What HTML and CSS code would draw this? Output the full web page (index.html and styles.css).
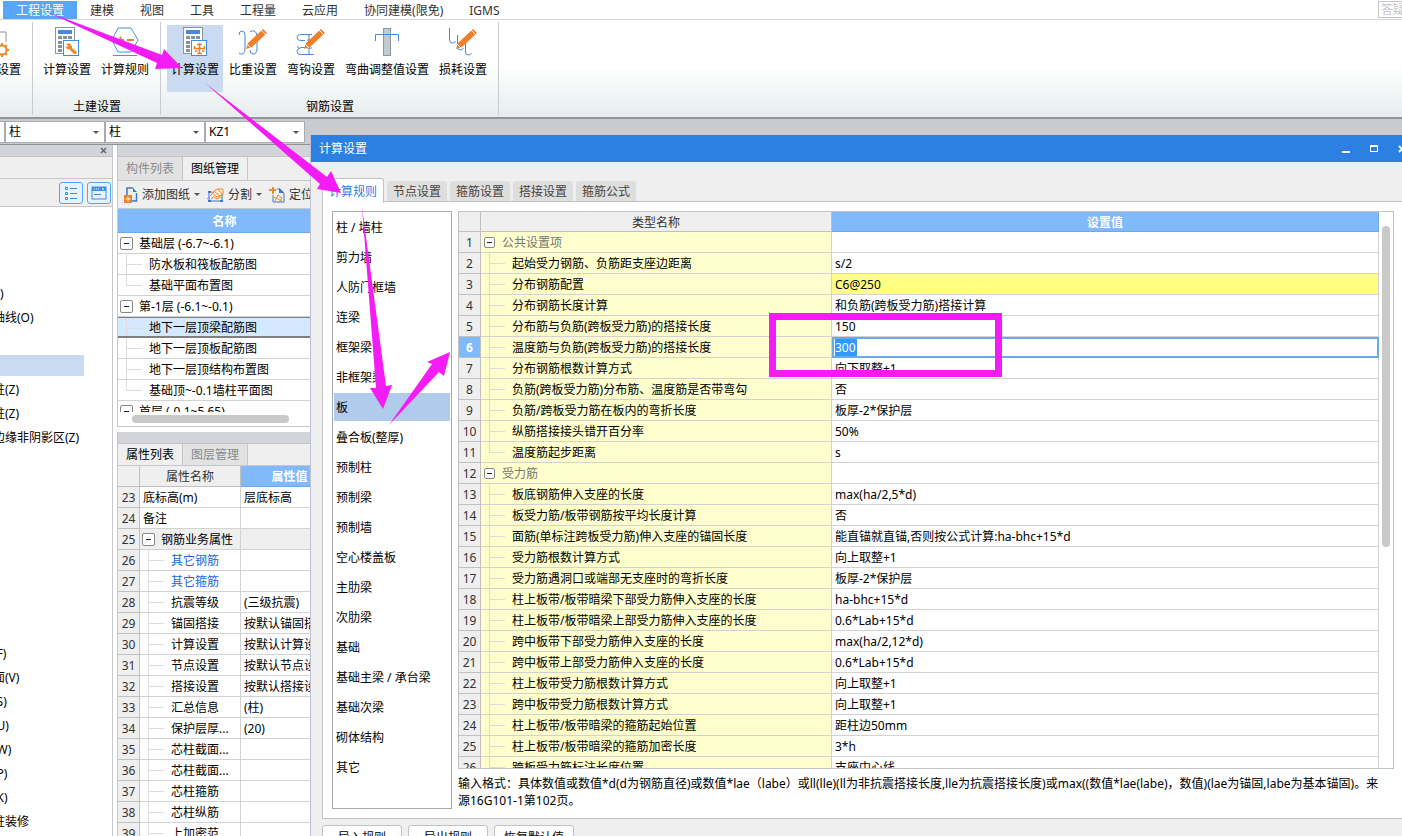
FILE: index.html
```html
<!DOCTYPE html>
<html lang="zh-CN">
<head>
<meta charset="utf-8">
<meta name="viewport" content="width=device-width, initial-scale=1">
<title>计算设置</title>
<link rel="stylesheet" href="styles.css">
</head>
<body>
<svg class="defs" width="0" height="0" aria-hidden="true">
  <defs>
    <g id="calc">
      <rect x="0.5" y="0.5" width="19" height="26" fill="#fff" stroke="#8b979e"/>
      <rect x="3" y="3" width="14" height="4" fill="#4689dd"/>
      <path d="M3 9h4v3H3zM8 9h4v3H8zM13 9h4v3h-4zM3 14h4v3H3zM8 14h4v3H8zM3 18h4v3H3zM3 22h4v3H3z" fill="#87939b"/>
      <rect x="8.500" y="13.500" width="15" height="15" fill="#fff" stroke="#3f8fe0"/>
    </g>
    <g id="pencil">
      <path d="M0 21l2-6 15-14 4 4L6 19z" fill="#f07f2c"/>
      <path d="M15 2l5 5M1 16l4 4" stroke="#fff" stroke-width="1"/>
    </g>
  </defs>
</svg>
<div class="app">
  <nav class="menubar">
    <button class="menu active">工程设置</button>
    <button class="menu">建模</button>
    <button class="menu">视图</button>
    <button class="menu">工具</button>
    <button class="menu">工程量</button>
    <button class="menu">云应用</button>
    <button class="menu">协同建模(限免)</button>
    <button class="menu">IGMS</button>
    <input class="search" type="text" placeholder="答疑" aria-label="答疑">
  </nav>

  <div class="ribbon">
    <section class="group first">
      <div class="tools">
        <button class="tool">
          <svg width="24" height="30" viewBox="0 0 24 30" fill="none">
            <path d="M0 1h12v4h9v10M12 5v14M4 10h8M4 17h8" stroke="#8b979e"/>
            <circle cx="17" cy="23" r="4.500" stroke="#ee8a2e" stroke-width="2"/>
            <path d="M17 16v2M17 28v2M10 23h2M22 23h2M12 18l2 2M20 26l2 2M22 18l-2 2M14 26l-2 2" stroke="#ee8a2e" stroke-width="2"/>
          </svg>
          <span>楼层设置</span>
        </button>
      </div>
    </section>
    <section class="group">
      <div class="tools">
        <button class="tool">
          <svg width="24" height="30" viewBox="0 0 24 30">
            <use href="#calc"/>
            <path d="M11 17l3-1 3 3v2l5 4-1 2-2 0-5-5h-2l-2-3 2 1 1-1z" fill="#ee8a2e"/>
          </svg>
          <span>计算设置</span>
        </button>
        <button class="tool">
          <svg width="28" height="30" viewBox="0 0 28 30" fill="none">
            <path d="M7 1h13l7 12-7 12H7L1 13zM2 28.500h24" stroke="#4a90e2"/>
            <path d="M6 13h7M9.500 9.500v7M16 13h7" stroke="#f07f2c" stroke-width="2"/>
          </svg>
          <span>计算规则</span>
        </button>
      </div>
      <h2>土建设置</h2>
    </section>
    <section class="group">
      <div class="tools">
        <button class="tool active">
          <svg width="24" height="30" viewBox="0 0 24 30" fill="none">
            <use href="#calc"/>
            <path d="M16.500 16v10M14 17.500h5M11.500 19v2.500h10V19M12 24h2.500M19 24h2.500M14 26.500h5" stroke="#f07f2c" stroke-width="1.500"/>
          </svg>
          <span>计算设置</span>
        </button>
        <button class="tool">
          <svg width="30" height="30" viewBox="0 0 30 30" fill="none">
            <path d="M1 8q0-4 3-4t3 4v14q0 5-3 5-2 0-3-1M12 5q2-2 4-1 3 1 3 5v13q0 5-4 5-3 0-3-4" stroke="#4689dd"/>
            <use href="#pencil" x="8" y="1"/>
          </svg>
          <span>比重设置</span>
        </button>
        <button class="tool">
          <svg width="30" height="30" viewBox="0 0 30 30" fill="none">
            <path d="M16 7.500H5q-4 0-4 3t4 3h4M1 20h2M18 27.500H5q-4 0-4-3t4-4h4M13 7v20M11 13h5M11 21h5M10 27.500h8" stroke="#4689dd"/>
            <use href="#pencil" x="8" y="1"/>
          </svg>
          <span>弯钩设置</span>
        </button>
        <button class="tool">
          <svg width="26" height="30" viewBox="0 0 26 30" fill="none">
            <rect x="9.500" y="1.500" width="7" height="27" fill="#c3cacd" stroke="#8b979e"/>
            <path d="M1.500 14V7.500h23V14" stroke="#4689dd"/>
          </svg>
          <span>弯曲调整值设置</span>
        </button>
        <button class="tool">
          <svg width="30" height="30" viewBox="0 0 30 30" fill="none">
            <path d="M1.500 1v12q0 3 3 3 2 0 3-2M9.500 8v12q0 3 3 3 2 0 3-2M17.500 16v9q0 3 3 3 2 0 3-2" stroke="#4689dd"/>
            <use href="#pencil" x="8" y="1"/>
          </svg>
          <span>损耗设置</span>
        </button>
      </div>
      <h2>钢筋设置</h2>
    </section>
  </div>

  <div class="selectors">
    <span class="combo stub"></span>
    <span class="combo"><select aria-label="构件大类"><option>柱</option></select><i class="caret"></i></span>
    <span class="combo"><select aria-label="构件类型"><option>柱</option></select><i class="caret"></i></span>
    <span class="combo"><select aria-label="构件名称"><option>KZ1</option></select><i class="caret"></i></span>
  </div>

  <div class="workspace">
    <aside class="nav">
      <div class="grip"><button class="close" aria-label="关闭">
        <svg width="7" height="7" viewBox="0 0 7 7"><path d="M1 1l5 5M6 1L1 6" stroke="#666" stroke-width="1.500"/></svg></button></div>
      <div class="nav-title"></div>
      <div class="nav-tools">
        <button aria-label="列表视图">
          <svg width="14" height="14" viewBox="0 0 14 14" fill="none" stroke="#3f8fe0"><path d="M1.500 1.500h2v2h-2zM1.500 6.500h2v2h-2zM1.500 11.500h2v2h-2zM6 2.500h7M6 7.500h7M6 12.500h7"/></svg>
        </button>
        <button aria-label="图标视图">
          <svg width="16" height="14" viewBox="0 0 16 14" fill="none"><rect x="1" y="1" width="14" height="12" stroke="#3f8fe0"/><path d="M1 1h14v4H1z" fill="#3f8fe0"/><path d="M3 3h1M5 3h1M7 3h1M11 3h2" stroke="#fff"/><path d="M3 8.500h7" stroke="#3f8fe0"/></svg>
        </button>
      </div>
      <ul class="nav-list">
        <li>轴网(J)</li><li>辅助轴线(O)</li><li></li><li class="selected"></li>
        <li>构造柱(Z)</li><li>砌体柱(Z)</li><li>约束边缘非阴影区(Z)</li>
        <li></li><li></li><li></li><li></li><li></li><li></li><li></li><li></li>
        <li>房间(F)</li><li>楼地面(V)</li><li>踢脚(S)</li><li>墙裙(U)</li><li>墙面(W)</li><li>天棚(P)</li><li>吊顶(K)</li><li>独立柱装修</li>
      </ul>
    </aside>

    <div class="side">
      <section class="drawings">
        <div class="grip"></div>
        <div class="tabs"><button>构件列表</button><button class="active">图纸管理</button></div>
        <div class="bar">
          <button>
            <svg width="14" height="16" viewBox="0 0 14 16" fill="none"><path d="M3 8V1h6M12.500 6v8H8" stroke="#3c78c8" stroke-width="1.500"/><path d="M9 1v4h4z" fill="#3c78c8"/><rect y="8" width="8" height="8" fill="#f07f2c"/><path d="M1.500 12h5M4 9.500v5" stroke="#fff"/></svg>
            添加图纸<i class="caret"></i></button>
          <button>
            <svg width="17" height="16" viewBox="0 0 17 16" fill="none"><path d="M5 5H2v9h13V7" stroke="#3c78c8"/><path d="M1 5h3M1 14h3M13 14h3" stroke="#3c78c8" stroke-width="2"/><path d="M0 12L9 3M5 6l5-4h6v6l-6 2zM8 5l5 4M11 2l4 5M4 12l3-2 3 2 4-2" stroke="#ee8a2e"/></svg>
            分割<i class="caret"></i></button>
          <button>
            <svg width="16" height="16" viewBox="0 0 16 16" fill="none"><path d="M8 2h3l4 4v9H4V8" stroke="#3c78c8"/><path d="M10 1v5h5z" fill="#3c78c8"/><path d="M0 3h7M4 0v7" stroke="#ee8a2e" stroke-width="2"/><path d="M6 14l3-6 4 3-3 4M5 10l8 4" stroke="#ee8a2e"/></svg>
            定位</button>
        </div>
        <div class="drawing-scroll">
          <table class="grid drawing-grid">
            <thead><tr><th>名称</th></tr></thead>
            <tbody>
              <tr><td class="root"><button class="toggle" aria-label="折叠"></button>基础层 (-6.7~-6.1)</td></tr>
              <tr><td class="leaf">防水板和筏板配筋图</td></tr>
              <tr><td class="leaf last">基础平面布置图</td></tr>
              <tr><td class="root"><button class="toggle" aria-label="折叠"></button>第-1层 (-6.1~-0.1)</td></tr>
              <tr class="current"><td class="leaf">地下一层顶梁配筋图</td></tr>
              <tr><td class="leaf">地下一层顶板配筋图</td></tr>
              <tr><td class="leaf">地下一层顶结构布置图</td></tr>
              <tr><td class="leaf last">基础顶~-0.1墙柱平面图</td></tr>
              <tr><td class="root"><button class="toggle" aria-label="折叠"></button>首层 (-0.1~5.65)</td></tr>
            </tbody>
          </table>
        </div>
        <div class="hscroll"><i></i></div>
      </section>

      <section class="props">
        <div class="grip"></div>
        <div class="tabs"><button class="active">属性列表</button><button>图层管理</button></div>
        <table class="grid prop-grid">
          <colgroup><col class="c-num"><col class="c-name"><col></colgroup>
          <thead><tr><th></th><th>属性名称</th><th class="hot">属性值</th></tr></thead>
          <tbody>
            <tr><th>23</th><td>底标高(m)</td><td>层底标高</td></tr>
            <tr><th>24</th><td>备注</td><td></td></tr>
            <tr class="section"><th>25</th><td class="root"><button class="toggle" aria-label="折叠"></button>钢筋业务属性</td><td></td></tr>
            <tr><th>26</th><td class="leaf link">其它钢筋</td><td></td></tr>
            <tr><th>27</th><td class="leaf link">其它箍筋</td><td></td></tr>
            <tr><th>28</th><td class="leaf">抗震等级</td><td>(三级抗震)</td></tr>
            <tr><th>29</th><td class="leaf">锚固搭接</td><td>按默认锚固搭接</td></tr>
            <tr><th>30</th><td class="leaf">计算设置</td><td>按默认计算设置</td></tr>
            <tr><th>31</th><td class="leaf">节点设置</td><td>按默认节点设置</td></tr>
            <tr><th>32</th><td class="leaf">搭接设置</td><td>按默认搭接设置</td></tr>
            <tr><th>33</th><td class="leaf">汇总信息</td><td>(柱)</td></tr>
            <tr><th>34</th><td class="leaf">保护层厚...</td><td>(20)</td></tr>
            <tr><th>35</th><td class="leaf">芯柱截面...</td><td></td></tr>
            <tr><th>36</th><td class="leaf">芯柱截面...</td><td></td></tr>
            <tr><th>37</th><td class="leaf">芯柱箍筋</td><td></td></tr>
            <tr><th>38</th><td class="leaf">芯柱纵筋</td><td></td></tr>
            <tr><th>39</th><td class="leaf">上加密范</td><td></td></tr>
          </tbody>
        </table>
      </section>
    </div>
  </div>

  <div class="dialog" role="dialog" aria-labelledby="dialog-title">
    <header class="titlebar">
      <h1 id="dialog-title">计算设置</h1>
      <button aria-label="最小化"><svg width="8" height="8" viewBox="0 0 8 8"><path d="M0 6h8v2H0z" fill="#fff"/></svg></button>
      <button aria-label="最大化"><svg width="8" height="8" viewBox="0 0 8 8"><path d="M0 0h8v7H0zM1 2v4h6V2z" fill="#fff" fill-rule="evenodd"/></svg></button>
      <button aria-label="关闭"><svg width="8" height="8" viewBox="0 0 8 8"><path d="M1 1l6 6M7 1L1 7" stroke="#fff" stroke-width="2"/></svg></button>
    </header>
    <div class="dialog-tabs">
      <button class="active">计算规则</button><button>节点设置</button><button>箍筋设置</button><button>搭接设置</button><button>箍筋公式</button>
    </div>
    <div class="pane">
      <ul class="kinds">
        <li>柱 / 墙柱</li><li>剪力墙</li><li>人防门框墙</li><li>连梁</li><li>框架梁</li><li>非框架梁</li><li class="selected">板</li><li>叠合板(整厚)</li><li>预制柱</li><li>预制梁</li><li>预制墙</li><li>空心楼盖板</li><li>主肋梁</li><li>次肋梁</li><li>基础</li><li>基础主梁 / 承台梁</li><li>基础次梁</li><li>砌体结构</li><li>其它</li>
      </ul>
      <div class="rules">
        <div class="rule-box">
          <div class="rule-scroll">
            <table class="grid rule-grid">
              <colgroup><col class="c-num"><col class="c-kind"><col></colgroup>
              <thead><tr><th></th><th>类型名称</th><th class="hot">设置值</th></tr></thead>
              <tbody>
                <tr><th>1</th><td class="root"><button class="toggle" aria-label="折叠"></button>公共设置项</td><td></td></tr>
                <tr><th>2</th><td class="leaf">起始受力钢筋、负筋距支座边距离</td><td>s/2</td></tr>
                <tr class="changed"><th>3</th><td class="leaf">分布钢筋配置</td><td>C6@250</td></tr>
                <tr><th>4</th><td class="leaf">分布钢筋长度计算</td><td>和负筋(跨板受力筋)搭接计算</td></tr>
                <tr><th>5</th><td class="leaf">分布筋与负筋(跨板受力筋)的搭接长度</td><td>150</td></tr>
                <tr class="editing"><th>6</th><td class="leaf">温度筋与负筋(跨板受力筋)的搭接长度</td><td><input type="text" value="300" aria-label="温度筋与负筋(跨板受力筋)的搭接长度"></td></tr>
                <tr><th>7</th><td class="leaf">分布钢筋根数计算方式</td><td>向下取整+1</td></tr>
                <tr><th>8</th><td class="leaf">负筋(跨板受力筋)分布筋、温度筋是否带弯勾</td><td>否</td></tr>
                <tr><th>9</th><td class="leaf">负筋/跨板受力筋在板内的弯折长度</td><td>板厚-2*保护层</td></tr>
                <tr><th>10</th><td class="leaf">纵筋搭接接头错开百分率</td><td>50%</td></tr>
                <tr><th>11</th><td class="leaf last">温度筋起步距离</td><td>s</td></tr>
                <tr><th>12</th><td class="root"><button class="toggle" aria-label="折叠"></button>受力筋</td><td></td></tr>
                <tr><th>13</th><td class="leaf">板底钢筋伸入支座的长度</td><td>max(ha/2,5*d)</td></tr>
                <tr><th>14</th><td class="leaf">板受力筋/板带钢筋按平均长度计算</td><td>否</td></tr>
                <tr><th>15</th><td class="leaf">面筋(单标注跨板受力筋)伸入支座的锚固长度</td><td>能直锚就直锚,否则按公式计算:ha-bhc+15*d</td></tr>
                <tr><th>16</th><td class="leaf">受力筋根数计算方式</td><td>向上取整+1</td></tr>
                <tr><th>17</th><td class="leaf">受力筋遇洞口或端部无支座时的弯折长度</td><td>板厚-2*保护层</td></tr>
                <tr><th>18</th><td class="leaf">柱上板带/板带暗梁下部受力筋伸入支座的长度</td><td>ha-bhc+15*d</td></tr>
                <tr><th>19</th><td class="leaf">柱上板带/板带暗梁上部受力筋伸入支座的长度</td><td>0.6*Lab+15*d</td></tr>
                <tr><th>20</th><td class="leaf">跨中板带下部受力筋伸入支座的长度</td><td>max(ha/2,12*d)</td></tr>
                <tr><th>21</th><td class="leaf">跨中板带上部受力筋伸入支座的长度</td><td>0.6*Lab+15*d</td></tr>
                <tr><th>22</th><td class="leaf">柱上板带受力筋根数计算方式</td><td>向上取整+1</td></tr>
                <tr><th>23</th><td class="leaf">跨中板带受力筋根数计算方式</td><td>向上取整+1</td></tr>
                <tr><th>24</th><td class="leaf">柱上板带/板带暗梁的箍筋起始位置</td><td>距柱边50mm</td></tr>
                <tr><th>25</th><td class="leaf">柱上板带/板带暗梁的箍筋加密长度</td><td>3*h</td></tr>
                <tr><th>26</th><td class="leaf">跨板受力筋标注长度位置</td><td>支座中心线</td></tr>
              </tbody>
            </table>
          </div>
          <div class="vscroll"><i></i></div>
        </div>
        <p class="note">输入格式：具体数值或数值*d(d为钢筋直径)或数值*lae（labe）或ll(lle)(ll为非抗震搭接长度,lle为抗震搭接长度)或max((数值*lae(labe)，数值)(lae为锚固,labe为基本锚固)。来源16G101-1第102页。</p>
      </div>
    </div>
    <footer class="actions"><button>导入规则</button><button>导出规则</button><button>恢复默认值</button></footer>
  </div>

  <svg class="marks" width="1402" height="836" viewBox="0 0 1402 836" aria-hidden="true">
    <g fill="#f41cf4">
      <path d="M45 11L162 55L164 49L182 68L155 69L157 63Z"/>
      <path d="M205 83L327 177L331 171L341 193L317 189L320 184Z"/>
      <path d="M362 207L386 386L392 385L383 409L370 388L376 388Z"/>
      <path d="M389 425L432 364L427 362L450 352L444 376L439 372Z"/>
    </g>
    <rect x="772.500" y="316.500" width="226" height="57" fill="none" stroke="#f41cf4" stroke-width="7"/>
  </svg>
</div>
</body>
</html>
```
FILE: styles.css
```css
* { box-sizing: border-box; }
body {
  margin: 0;
  background: #fff;
  color: #000;
  font: 12px/16px "Noto Sans", "Noto Sans CJK SC", sans-serif;
}
button, input, select { font: inherit; color: inherit; margin: 0; }
button { border: 0; background: none; padding: 0; white-space: nowrap; }
h1, h2, p, ul { margin: 0; padding: 0; font-size: 12px; font-weight: 400; }
ul { list-style: none; }
svg { display: block; flex: none; }
.defs { position: absolute; }
.app { position: relative; height: 100vh; overflow: hidden; display: flex; flex-direction: column; }

/* menu */
.menubar { display: flex; flex: none; height: 20px; padding: 1px 0 0 3px; border-bottom: 1px solid #d8d8d8; overflow: hidden; }
.menu { flex: none; height: 18px; padding: 2px 13px 0; color: #333; }
.menu.active { background: #57a6f8; color: #fff; }
.search { width: 24px; height: 17px; margin-left: auto; padding: 0 0 0 2px; border: 1px solid #c4c4c4; border-right: 0; outline: 0; }
.search::placeholder { color: #c4c4c4; opacity: 1; }

/* ribbon */
.ribbon { display: flex; flex: none; height: 99px; padding: 2px 0; background: linear-gradient(#fff 48%, #e6ecec); border-bottom: 2px solid #929496; }
.group { display: flex; flex-direction: column; justify-content: space-between; height: 93px; padding: 3px 7px 0 6px; border-right: 1px solid #c9cccf; }
.group.first { width: 33px; align-items: flex-end; overflow: hidden; }
.group h2 { padding-left: 2px; text-align: center; }
.tools { display: flex; gap: 2px; }
.tool { display: flex; flex-direction: column; align-items: center; gap: 5px; flex: none; height: 67px; padding: 2px 4px 0; }
.tool.active { background: #c9daf1; }

/* selectors */
.selectors { display: flex; flex: none; height: 26px; padding-top: 2px; background: #c9cbd1; border-bottom: 1px solid #8f9296; }
.combo { display: flex; align-items: center; width: 100px; height: 22px; padding-right: 5px; background: #fff; border: 1px solid #a9abae; }
.combo.stub { width: 5px; border-left: 0; padding: 0; }
.combo select { flex: 1; appearance: none; border: 0; background: none; padding: 0 3px; outline: 0; }
.caret { width: 0; height: 0; border: 3px solid transparent; border-top-color: #555; border-bottom: 0; pointer-events: none; }

.workspace { display: flex; flex: 1; min-height: 0; }
.grip { display: flex; flex: none; justify-content: flex-end; align-items: center; height: 12px; padding-right: 5px; background: #d2d4da; border-bottom: 1px solid #c2c4ca; }

/* component list */
.nav { display: flex; flex-direction: column; flex: none; width: 113px; border-right: 1px solid #c5c7cc; overflow: hidden; }
.nav-title { flex: none; height: 22px; background: #efefef; border-bottom: 1px solid #c5c7cc; }
.nav-tools { display: flex; flex: none; justify-content: flex-end; align-items: center; gap: 4px; height: 28px; padding-right: 1px; background: #efefef; border-bottom: 1px solid #c5c7cc; }
.nav-tools button { display: grid; place-items: center; width: 24px; height: 22px; border: 1px solid #55a5f5; border-radius: 3px; background: #e6f2fe; }
.nav-list { margin: 75px 0 0 -31px; white-space: nowrap; }
.nav-list li { height: 24px; line-height: 24px; }
.nav-list .selected { width: 115px; background: linear-gradient(#c9daf1, #c9daf1) 0 1px / 100% 21px no-repeat; }

/* middle panels */
.side { display: flex; flex-direction: column; flex: none; gap: 5px; width: 222px; margin-left: 4px; }
.tabs { display: flex; flex: none; height: 22px; background: #efefef; border-bottom: 1px solid #c5c7cc; }
.tabs button { width: 65px; border-right: 1px solid #c5c7cc; background: #e2e2e2; color: #8a8a8a; }
.tabs .active { background: #efefef; color: #000; }
.drawings { display: flex; flex-direction: column; flex: none; height: 282px; border-left: 1px solid #c5c7cc; border-bottom: 1px solid #c5c7cc; }
.drawings .tabs { height: 24px; }
.bar { display: flex; flex: none; gap: 7px; height: 28px; padding-left: 6px; background: #efefef; border-bottom: 1px solid #c5c7cc; }
.bar button { display: flex; align-items: center; gap: 4px; color: #333; }
.drawing-scroll { flex: 1; min-height: 0; overflow: hidden; }
.hscroll { flex: none; height: 14px; padding: 3px 14px; }
.hscroll i { display: block; width: 157px; height: 8px; border-radius: 4px; background: #c9c9c9; }

/* grids */
.grid { width: 100%; table-layout: fixed; border-collapse: separate; border-spacing: 0; }
.grid th, .grid td { height: 21px; padding: 2px 0 0 3px; border: 0 solid #d2d2d2; border-width: 0 1px 1px 0; overflow: hidden; white-space: nowrap; text-align: left; font-weight: 400; line-height: 18px; }
.grid th { padding-left: 0; background: #efefef; border-color: #c0c0c0; color: #333; text-align: center; }
.grid .hot, .drawing-grid th { background: #80bafa; border-color: #6aaaea; color: #fff; font-weight: 700; }
.c-num { width: 22px; }
.c-name { width: 101px; }
.c-kind { width: 351px; }
.toggle { display: inline-block; width: 13px; height: 13px; margin-right: 6px; border: 1px solid #888; border-radius: 2px; background: linear-gradient(#222, #222) center / 5px 1px no-repeat #fff; vertical-align: -1px; }
.grid .leaf {
  padding-left: 31px;
  background-image: linear-gradient(#dcdcdc, #dcdcdc), linear-gradient(#dcdcdc, #dcdcdc);
  background-size: 1px 21px, 16px 1px;
  background-position: 8px 0, 8px 10px;
  background-repeat: no-repeat;
}
.grid .leaf.last { background-size: 1px 10px, 16px 1px; }
.grid .root { padding-left: 2px; }
.drawing-grid { width: 214px; }
.drawing-grid thead th { height: 24px; }
.drawing-grid .current td { padding-top: 1px; background-color: #d5e9fe; border-bottom: 2px solid #808080; border-top: 1px solid #808080; line-height: 17px; }
.props { flex: 1; min-height: 0; border-left: 1px solid #c5c7cc; overflow: hidden; }
.props .link { color: #1a66e0; }
.props .section td { background: #efefef; }

/* dialog */
.dialog { position: absolute; left: 310px; right: -20px; top: 135px; bottom: -25px; display: flex; flex-direction: column; background: #efefef; border-left: 1px solid #bcc3d6; }
.titlebar { display: flex; flex: none; align-items: center; gap: 20px; height: 27px; padding: 0 16px 0 8px; background: #2c80e2; color: #fff; }
.titlebar h1 { margin-right: auto; }
.dialog-tabs { display: flex; flex: none; align-items: flex-end; gap: 3px; height: 40px; padding-left: 11px; }
.dialog-tabs button { width: 60px; height: 20px; padding-top: 2px; margin-bottom: 1px; border-radius: 3px 3px 0 0; background: #dedede; color: #444; }
.dialog-tabs .active { position: relative; width: 62px; height: 25px; margin-bottom: -1px; border: 1px solid #c2c2c2; border-bottom: 0; background: #fff; color: #2c80e2; }
.pane { display: flex; flex: 1; gap: 6px; min-height: 0; margin: -1px 0 0 11px; padding: 9px 28px 9px 9px; border: 1px solid #c2c2c2; border-right: 0; background: #fff; }
.kinds { flex: none; width: 120px; padding: 1px; border: 1px solid #a9a9a9; }
.kinds li { height: 28px; margin-bottom: 2px; padding-left: 2px; line-height: 30px; }
.kinds .selected { background: #b1cbec; }
.rules { display: flex; flex-direction: column; flex: 1; min-width: 0; gap: 6px; }
.rule-box { display: flex; flex: 1; min-height: 0; border: 1px solid #c2c2c2; }
.rule-scroll { flex: 1; min-width: 0; overflow: hidden; }
.vscroll { flex: none; width: 14px; padding: 14px 3px; }
.vscroll i { display: block; width: 8px; height: 321px; border-radius: 4px; background: #c9c9c9; }
.rule-grid thead th { height: 20px; line-height: 17px; }
.rule-grid td:nth-child(2) { background-color: #ffffcd; }
.rule-grid .root { padding-left: 3px; color: #777; }
.rule-grid .toggle { width: 11px; height: 11px; margin-right: 7px; vertical-align: 0; }
.rule-grid .changed td:last-child { background: #ffff82; }
.rule-grid .editing th { background: #80bafa; color: #fff; font-weight: 700; }
.rule-grid .editing td:last-child { padding: 0 0 0 1px; border: 2px solid #68aaea; line-height: 17px; }
.editing input { display: block; width: 22px; height: 17px; padding: 0; border: 0; outline: 0; background: #3399ff; color: #fff; }
.note { flex: none; height: 34px; padding-right: 8px; line-height: 17px; }
.actions { display: flex; flex: none; gap: 6px; padding: 6px 11px 10px; }
.actions button { width: 80px; height: 26px; border: 1px solid #c2c2c2; border-radius: 3px; background: #fff; }

/* annotation arrows drawn over everything */
.marks { position: absolute; left: 0; top: 0; pointer-events: none; }
```
